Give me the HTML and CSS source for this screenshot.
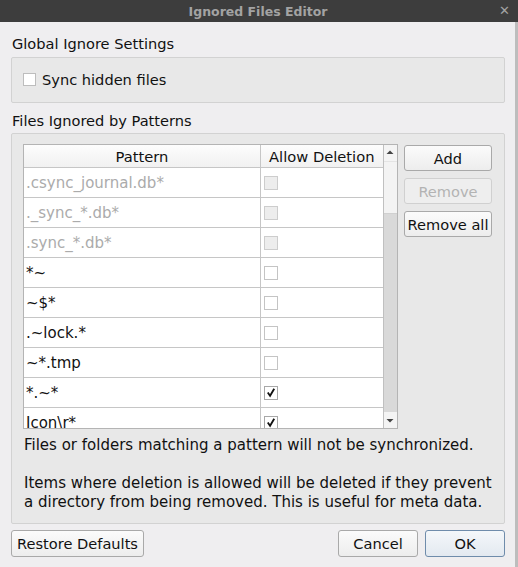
FILE: index.html
```html
<!DOCTYPE html>
<html>
<head>
<meta charset="utf-8">
<link rel="stylesheet" href="styles.css">
</head>
<body>
<div class="window">
  <div class="titlebar">
    <span class="title">Ignored Files Editor</span>
    <span class="close">✕</span>
  </div>
  <div class="content">
    <div class="section-label first">Global Ignore Settings</div>
    <div class="group group-global">
      <label class="check"><span class="box"></span><span>Sync hidden files</span></label>
    </div>
    <div class="section-label second">Files Ignored by Patterns</div>
    <div class="group group-patterns">
      <div class="top-row">
        <div class="table">
          <div class="table-main">
            <div class="thead">
              <div class="col-pattern">Pattern</div>
              <div class="col-allow">Allow Deletion</div>
            </div>
            <div class="tbody">
              <div class="tr disabled"><div class="col-pattern">.csync_journal.db*</div><div class="col-allow"><span class="cb dis"></span></div></div>
              <div class="tr disabled"><div class="col-pattern">._sync_*.db*</div><div class="col-allow"><span class="cb dis"></span></div></div>
              <div class="tr disabled"><div class="col-pattern">.sync_*.db*</div><div class="col-allow"><span class="cb dis"></span></div></div>
              <div class="tr"><div class="col-pattern">*~</div><div class="col-allow"><span class="cb"></span></div></div>
              <div class="tr"><div class="col-pattern">~$*</div><div class="col-allow"><span class="cb"></span></div></div>
              <div class="tr"><div class="col-pattern">.~lock.*</div><div class="col-allow"><span class="cb"></span></div></div>
              <div class="tr"><div class="col-pattern">~*.tmp</div><div class="col-allow"><span class="cb"></span></div></div>
              <div class="tr"><div class="col-pattern">*.~*</div><div class="col-allow"><span class="cb on"><svg viewBox="0 0 13 13" width="13" height="13"><path d="M3 6.5 L5.5 10 L10 2.5" fill="none" stroke="#111" stroke-width="2"/></svg></span></div></div>
              <div class="tr"><div class="col-pattern">Icon\r*</div><div class="col-allow"><span class="cb on"><svg viewBox="0 0 13 13" width="13" height="13"><path d="M3 6.5 L5.5 10 L10 2.5" fill="none" stroke="#111" stroke-width="2"/></svg></span></div></div>
            </div>
          </div>
          <div class="scrollbar">
            <div class="sb-arrow up"><svg viewBox="0 0 14 16" width="14" height="16"><path d="M3.5 9 L7 5.5 L10.5 9 Z" fill="#444"/></svg></div>
            <div class="sb-handle"></div>
            <div class="sb-track"></div>
            <div class="sb-arrow down"><svg viewBox="0 0 14 16" width="14" height="16"><path d="M3.5 7 L7 10.5 L10.5 7 Z" fill="#444"/></svg></div>
          </div>
        </div>
        <div class="side-buttons">
          <button class="btn">Add</button>
          <button class="btn disabled">Remove</button>
          <button class="btn">Remove all</button>
        </div>
      </div>
      <p class="note">Files or folders matching a pattern will not be synchronized.<br><br>Items where deletion is allowed will be deleted if they prevent<br>a directory from being removed. This is useful for meta data.</p>
    </div>
    <div class="footer">
      <button class="btn wide">Restore Defaults</button>
      <div class="spacer"></div>
      <button class="btn action">Cancel</button>
      <button class="btn action default">OK</button>
    </div>
  </div>
</div>
</body>
</html>
```

FILE: styles.css
```css
* { box-sizing: border-box; }
html, body { margin: 0; padding: 0; }
body {
  background: #efeef0;
  font-family: "DejaVu Sans", sans-serif;
  font-size: 14px;
  color: #111;
  width: 518px;
  height: 567px;
  overflow: hidden;
}
.window {
  width: 518px;
  height: 567px;
  display: flex;
  flex-direction: column;
}
.titlebar {
  height: 22px;
  flex-shrink: 0;
  background: #3d3d3d;
  position: relative;
  display: flex;
  align-items: center;
  justify-content: center;
}
.title {
  color: #a3a3a3;
  font-weight: bold;
  font-size: 12.5px;
  margin-left: -2px;
}
.close {
  position: absolute;
  right: 8px;
  top: 3px;
  color: #a3a3a3;
  font-size: 13px;
  font-weight: bold;
}
.content {
  flex: 1;
  padding: 0 10px 0 11px;
  border-right: 3px solid #bdbdbd;
  display: flex;
  flex-direction: column;
}
.section-label {
  line-height: 17px;
  padding-left: 1px;
  font-size: 14.6px;
}
.section-label.first { padding-top: 13px; margin-bottom: 5px; }
.section-label.second { padding-top: 9px; margin-bottom: 4px; }
.group {
  background: #e8e8e8;
  border: 1px solid #d2d2d2;
  border-radius: 2px;
  flex-shrink: 0;
}
.group-global {
  height: 46px;
  padding: 12px 11px 0 11px;
}
.check {
  display: flex;
  align-items: center;
  height: 18px;
  font-size: 14.6px;
}
.box {
  width: 13px;
  height: 13px;
  background: #fff;
  border: 1px solid #bdbdbd;
  margin-right: 6px;
}
.group-patterns {
  height: 391px;
  padding: 10px 12px 0 11px;
}
.top-row {
  display: flex;
  align-items: flex-start;
}
.table {
  width: 375px;
  height: 285px;
  flex-shrink: 0;
  border: 1px solid #b4b4b4;
  display: flex;
  background: #fff;
  overflow: hidden;
}
.table-main {
  width: 359px;
  display: flex;
  flex-direction: column;
}
.thead {
  height: 23px;
  flex-shrink: 0;
  display: flex;
  background: linear-gradient(#fdfdfd, #f1f1f1);
  border-bottom: 1px solid #c6c6c6;
  font-size: 14.7px;
}
.thead .col-allow { padding-left: 8px; }
.col-pattern {
  width: 237px;
  border-right: 1px solid #c6c6c6;
  display: flex;
  align-items: center;
  justify-content: flex-start;
  padding-left: 2px;
}
.thead .col-pattern { justify-content: center; padding-left: 0; }
.col-allow {
  flex: 1;
  display: flex;
  align-items: center;
}
.tr {
  height: 30px;
  flex-shrink: 0;
  display: flex;
  border-bottom: 1px solid #c6c6c6;
  font-size: 15px;
}
.tr.disabled .col-pattern { color: #ababab; }
.tr .col-allow { padding-left: 3px; }
.cb {
  width: 14px;
  height: 14px;
  border: 1px solid #c4c4c4;
  background: #fff;
  display: flex;
  align-items: center;
  justify-content: center;
}
.cb.dis { background: #ededed; border-color: #cdcdcd; }
.cb.on { border-color: #a8a8a8; }
.cb svg { display: block; }
.scrollbar {
  width: 14px;
  border-left: 1px solid #c0c0c0;
  display: flex;
  flex-direction: column;
  background: #d9d9d9;
}
.sb-arrow {
  height: 16px;
  flex-shrink: 0;
  background: #f4f4f4;
}
.sb-arrow svg { display: block; margin-left: -1px; }
.sb-handle {
  height: 53px;
  flex-shrink: 0;
  background: #f3f3f3;
  border-top: 1px solid #e4e4e4;
  border-bottom: 1px solid #d0d0d0;
}
.sb-track { flex: 1; }
.side-buttons {
  margin-left: 6px;
  display: flex;
  flex-direction: column;
  gap: 7px;
  margin-top: 1px;
  flex-shrink: 0;
}
.btn {
  font-family: "DejaVu Sans", sans-serif;
  font-size: 14.6px;
  color: #111;
  height: 26px;
  width: 88px;
  padding: 0;
  background: linear-gradient(#fbfbfb, #ededed);
  border: 1px solid #a9a9a9;
  border-radius: 3px;
  white-space: nowrap;
}
.btn.disabled {
  color: #b3b3b3;
  border-color: #d0d0d0;
  background: #eeeeee;
}
.note {
  margin: 7px 0 0 1px;
  line-height: 19px;
  font-size: 15px;
}
.footer {
  display: flex;
  margin-top: 6px;
  gap: 7px;
}
.btn.wide { width: 133px; height: 27px; }
.btn.action { width: 80px; height: 27px; }
.btn.default {
  border-color: #6f8cab;
  background: linear-gradient(#f4f7fa, #e3e9f0);
}
.spacer { flex: 1; }
```
